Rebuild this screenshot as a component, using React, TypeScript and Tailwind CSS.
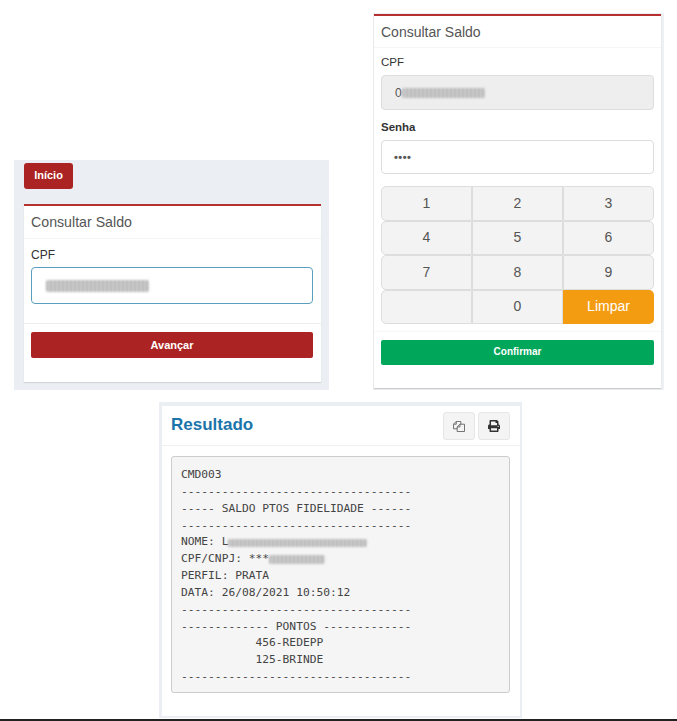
import { FaPrint } from "react-icons/fa";

const sans = "font-['Liberation_Sans',Arial,sans-serif]";

const Redacted = ({ className }: { className: string }) => (
  <span
    className={`inline-block rounded-[2px] bg-[repeating-linear-gradient(90deg,#b4b4b4_0_2px,#d2d2d2_2px_4px)] blur-[1px] ${className}`}
  />
);

const InitialPanel = () => (
  <div className="w-[315px] h-[230px] bg-[#ebeef3] pt-[3px] px-[10px] shrink-0">
    <button className="block w-[49px] h-[26px] pb-[2px] rounded-[3px] bg-[#ac2323] text-white text-[11px] font-bold">
      Início
    </button>
    <div className="mt-[15px] w-[297px] h-[178px] bg-white border-t-2 border-[#b5302f] shadow-[0_1px_1px_rgba(0,0,0,0.1)]">
      <div className="h-[33px] pl-[7px] pt-[6px] text-[14.2px] leading-[20px] text-[#555555] border-b border-[#f5f5f5]">
        Consultar Saldo
      </div>
      <div className="pl-[7px] pr-[8px] h-[85px] pt-[8px] border-b border-[#eeeeee]">
        <div className="text-[12px] leading-[16px] text-[#333333]">CPF</div>
        <div className="mt-[4px] h-[37px] flex items-center pl-[14px] border border-[#5b9fc0] rounded-[4px]">
          <Redacted className="w-[103px] h-[12px]" />
        </div>
      </div>
      <div className="pl-[7px] pr-[8px] pt-[8px]">
        <button className="block w-full h-[26px] rounded-[2px] bg-[#ac2323] text-white text-[11px] font-bold">
          Avançar
        </button>
      </div>
    </div>
  </div>
);

const keys = ["1", "2", "3", "4", "5", "6", "7", "8", "9", "", "0"];

const KeypadPanel = () => (
  <div className="w-[291px] h-[377px] bg-[#eff0f3] pr-[3px] pl-[1px] pt-[1px] shrink-0">
    <div className="h-[374px] bg-white border-t-2 border-[#b5302f] shadow-[0_1px_1px_rgba(0,0,0,0.15)]">
      <div className="h-[32px] pl-[7px] pt-[6px] text-[14px] leading-[20px] text-[#555555] border-b border-[#f5f5f5]">
        Consultar Saldo
      </div>
      <div className="px-[7px] pt-[6px] pb-[7px] border-b border-[#f7f7f7]">
        <div className="text-[11.5px] leading-[16px] text-[#333333]">CPF</div>
        <div className="mt-[5px] h-[35px] flex items-center pl-[13px] bg-[#eeeeee] border border-[#dddddd] rounded-[4px]">
          <span className="text-[12px] text-[#555555]">0</span>
          <Redacted className="w-[83px] h-[10px]" />
        </div>
        <div className="mt-[9px] text-[11.5px] leading-[16px] font-bold text-[#333333]">Senha</div>
        <div className="mt-[5px] h-[34px] flex items-center pl-[12px] border border-[#dddddd] rounded-[4px] text-[11px] font-bold tracking-[0.5px] text-[#555555]">
          ••••
        </div>
        <div className="mt-[12px] grid grid-cols-3 grid-rows-[repeat(4,34.5px)] h-[138px]">
          {keys.map((key, i) => (
            <div
              key={i}
              className={`flex items-center justify-center bg-[#f3f3f3] border border-[#dddddd] text-[14px] text-[#555555] ${
                i % 3 === 0 ? "rounded-l-[5px]" : ""
              } ${i % 3 === 2 ? "rounded-r-[5px]" : ""}`}
            >
              {key}
            </div>
          ))}
          <div className="flex items-center justify-center bg-[#f39c12] rounded-r-[5px] text-[14px] text-white">
            Limpar
          </div>
        </div>
      </div>
      <div className="px-[7px] pt-[8px]">
        <button className="block w-full h-[25px] pb-[2px] rounded-[2px] bg-[#00a65a] text-white text-[10px] font-bold">
          Confirmar
        </button>
      </div>
    </div>
  </div>
);

const lines = [
  "CMD003",
  "----------------------------------",
  "----- SALDO PTOS FIDELIDADE ------",
  "----------------------------------",
];

const tail = [
  "PERFIL: PRATA",
  "DATA: 26/08/2021 10:50:12",
  "----------------------------------",
  "------------- PONTOS -------------",
  "           456-REDEPP",
  "           125-BRINDE",
  "----------------------------------",
];

// fa-files-o, the icon package only has the newer copy glyph
const CopyIcon = () => (
  <svg viewBox="0 0 13 12" className="w-[12px] h-[11px]" fill="none" stroke="#666666" strokeWidth="1">
    <path d="M8.5 3.5V0.5H3.5L0.5 3.5V8.5H4.5" />
    <path d="M0.5 3.5H3.5V0.5" />
    <path d="M7.5 3.5H12.5V11.5H4.5V6.5Z" />
    <path d="M4.5 6.5H7.5V3.5" />
  </svg>
);

const ResultPanel = () => (
  <div className="w-[363px] h-[316px] bg-[#ebeef3] pt-[4px] pl-[3px] pr-[2px] pb-[2px]">
    <div className="h-[310px] bg-white">
      <div className="h-[40px] flex items-start justify-between pl-[9px] pr-[10px] pt-[6px] border-b border-[#f1f1f1]">
        <div className={`${sans} text-[17px] leading-[24px] mt-[1px] font-bold text-[#1b75ab]`}>Resultado</div>
        <div className="flex gap-[3px]">
          <button className="w-[32px] h-[28px] flex items-center justify-center bg-[#f4f4f4] border border-[#e6e6e6] rounded-[3px]">
            <CopyIcon />
          </button>
          <button className="w-[32px] h-[28px] flex items-center justify-center bg-[#f4f4f4] border border-[#e6e6e6] rounded-[3px] text-[#333333]">
            <FaPrint className="w-[12px] h-[12px]" />
          </button>
        </div>
      </div>
      <div className="mt-[10px] mx-[9px] w-[339px] h-[237px] bg-[#f5f5f5] border border-[#cccccc] rounded-[3px] pl-[9px] pt-[10px] font-['DejaVu_Sans_Mono',monospace] text-[11.25px] leading-[16.84px] text-[#444444] whitespace-pre">
        {lines.map((line, i) => (
          <div key={i}>{line}</div>
        ))}
        <div className="flex items-center">
          NOME: L<Redacted className="w-[139px] h-[8px]" />
        </div>
        <div className="flex items-center">
          CPF/CNPJ: ***<Redacted className="w-[56px] h-[9px]" />
        </div>
        {tail.map((line, i) => (
          <div key={i}>{line}</div>
        ))}
      </div>
    </div>
  </div>
);

export default function App() {
  return (
    <div className={`${sans} w-[677px] h-[721px] bg-white flex flex-col overflow-hidden`}>
      <div className="flex items-end gap-[44px] pl-[14px] pt-[13px]">
        <InitialPanel />
        <KeypadPanel />
      </div>
      <div className="mt-[12px] ml-[159px]">
        <ResultPanel />
      </div>
      <div className="mt-[1px] h-[2px] bg-[#222222]" />
    </div>
  );
}
